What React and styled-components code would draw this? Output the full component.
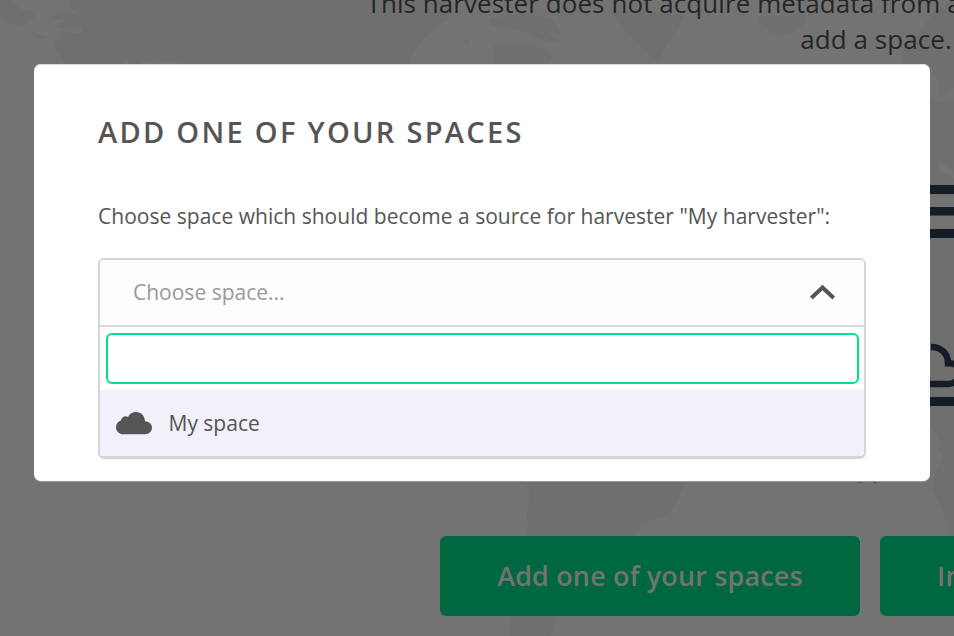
import React from "react";
import styled, { createGlobalStyle } from "styled-components";

const GlobalStyle = createGlobalStyle`
  * { box-sizing: border-box; }
  body {
    margin: 0;
    overflow: hidden;
    background: #737373;
    font-family: "Open Sans", "Noto Sans", sans-serif;
  }
`;

const Page = styled.div`
  position: relative;
  height: 636px;
  overflow: hidden;
  background: #737373;
`;

const WorldMap = styled.svg`
  position: absolute;
  inset: 0;
  display: block;
`;

const Content = styled.main`
  position: relative;
  display: flex;
  flex-direction: column;
  height: 636px;
`;

const Message = styled.p`
  flex: none;
  width: 1019px;
  height: 57px;
  margin: 0 0 2px 366.5px;
  display: flex;
  flex-direction: column;
  justify-content: flex-end;
  font-size: 26px;
  line-height: 36px;
  letter-spacing: 0.07px;
  color: #262626;
  white-space: nowrap;
`;

const MessageLine = styled.span`
  align-self: ${(p) => (p.$centered ? "center" : "flex-start")};
`;

const Illustration = styled.svg`
  flex: none;
  align-self: flex-end;
  display: block;
`;

const Actions = styled.div`
  flex: none;
  display: flex;
  gap: 20px;
  padding-left: 440px;
`;

const ActionButton = styled.button`
  flex: none;
  width: 420px;
  height: 80px;
  padding: ${(p) => (p.$alignStart ? "0 0 0 57px" : "0")};
  text-align: ${(p) => (p.$alignStart ? "left" : "center")};
  border: 0;
  border-radius: 6px;
  background: #006840;
  color: #737373;
  font: 600 27px/80px "Open Sans", sans-serif;
  letter-spacing: 0.15px;
  white-space: nowrap;
`;

const Overlay = styled.div`
  position: absolute;
  inset: 0;
  padding: 64px 24px 0 34px;
`;

const Modal = styled.section`
  height: 417px;
  padding: 46px 64px 0;
  border-radius: 7px;
  background: #fff;
  box-shadow: inset 0 1px 0 #dcdcdc, 0 1px 0 #999;
  color: #555;
`;

const Title = styled.h1`
  margin: 0;
  font-size: 29px;
  line-height: 44px;
  font-weight: 600;
  letter-spacing: 2.29px;
  text-transform: uppercase;
`;

const Label = styled.p`
  margin: 47px 0 0;
  font-size: 21px;
  line-height: 31px;
  letter-spacing: 0.02px;
  white-space: nowrap;
`;

const Select = styled.div`
  height: 201px;
  margin-top: 26px;
  border: 2px solid #d5d5d5;
  border-bottom-width: 3px;
  border-radius: 6px;
  overflow: hidden;
  font-size: 21px;
`;

const Trigger = styled.div`
  display: flex;
  align-items: center;
  justify-content: space-between;
  height: 67px;
  padding: 0 28px 1px 33px;
  border-bottom: 2px solid #d9d9d9;
  background: #fdfdfd;
  color: #999;
`;

const SearchBox = styled.div`
  padding: 6px 5px 6px 6px;
`;

const SearchInput = styled.input`
  display: block;
  width: 100%;
  height: 51px;
  padding: 0 16px;
  border: 2px solid #00e088;
  border-radius: 6px;
  outline: 0;
  background: #fff;
  font: inherit;
`;

const Option = styled.div`
  display: flex;
  align-items: center;
  gap: 16.5px;
  height: 66px;
  padding: 0 0 1px 16px;
  background: #f1f1fb;
`;

function Map() {
  return (
    <WorldMap width="954" height="636" viewBox="0 0 954 636">
      <g fill="#6f6f6f">
        <path d="M12 0 20 9 38 14 28 22 18 26 0 19V0zM68 0 70 8 78 12 76 14 66 12 49 17 53 20 64 19 62 23 57 25 60 29 80 26 83 30 78 34 60 31 58 38 54 44 57 53 62 58 66 64H409C412 50 423 37 433 31L440 24 448 20 450 0zM31 33 46 37 40 39zM52 60 60 59 58 62z" />
        <path d="M612 13 640 10 684 16 675 34 667 43 660 59 658 64 645 51 630 36 619 24zM491 18 530 13 553 20 561 34 548 31 558 42 543 40 520 30 490 25zM492 44 530 44 554 54 548 64H494zM757 17 805 15 808 20 795 31 781 35 770 32 763 25z" />
        <path d="M954 0 934 12 923 27 910 38 902 50V64H930V424L938 436 938 448 943 458 935 473 932 490 940 505 948 525 949 536H954z" />
        <path d="M520 481 529 491 529 502 527 512 528 529 527 536 511 616 509 636H551L555 616 634 536 640 530 640 524 668 515 680 496 686 481z" />
      </g>
      <g fill="#737373">
        <path d="M144 61Q165 59 184 64H140zM126 60 131 57 127 64H123zM930 66 938 84 938 98 954 88V101L940 103 930 96zM936 158 954 172V179L940 170zM930 197H954V207H930zM930 216H954V229H930z" />
      </g>
      <path fill="#6f6f6f" d="M463 41 471 39 467 44zM550 622 557 619 557 623z" />
    </WorldMap>
  );
}

export default function App() {
  return (
    <>
      <GlobalStyle />
      <Page>
        <Map />
        <Content>
          <Message>
            <MessageLine>This harvester does not acquire metadata from any</MessageLine>
            <MessageLine $centered>add a space.</MessageLine>
          </Message>
          <Illustration width="114" height="477" viewBox="840 59 114 477">
            <g fill="#141c26">
              <path d="M900 185H954V194H900zM900 207H954V215.500H900zM900 229H954V238H900zM900 397H954V406H900z" />
            </g>
            <path
              d="M920 384H949C953 384 957 381 959 377M957 366C955 364 953 363.300 950 363.300H948C948 353 941 347 931 347"
              fill="none"
              stroke="#141c26"
              strokeWidth="6.4"
            />
            <g fill="#4a4d50">
              <circle cx="860" cy="480" r="3" />
              <circle cx="875" cy="480" r="3" />
            </g>
          </Illustration>
          <Actions>
            <ActionButton>Add one of your spaces</ActionButton>
            <ActionButton $alignStart>Invite space</ActionButton>
          </Actions>
        </Content>
        <Overlay>
          <Modal>
            <Title>Add one of your spaces</Title>
            <Label>Choose space which should become a source for harvester "My harvester":</Label>
            <Select>
              <Trigger>
                <span>Choose space...</span>
                <svg width="27" height="16" viewBox="0 0 27 16">
                  <path d="M2.3 14 13.5 3.6 24.7 14" fill="none" stroke="#555" strokeWidth="4" />
                </svg>
              </Trigger>
              <SearchBox>
                <SearchInput />
              </SearchBox>
              <Option>
                <svg width="36" height="24" viewBox="0 0 36 24">
                  <path
                    d="M7.500 23.200C3 23.200 0 20 0 16.400C0 13 2 10.400 5 9.600C5.300 6 9 4.300 12 5.900C13.600 2.700 16.500 1 20 1C25.300 1 28.900 5.100 29 10.300C33 10.400 36 13.200 36 16.700C36 20.300 33 23.200 29 23.200Z"
                    fill="#555"
                  />
                </svg>
                <span>My space</span>
              </Option>
            </Select>
          </Modal>
        </Overlay>
      </Page>
    </>
  );
}
